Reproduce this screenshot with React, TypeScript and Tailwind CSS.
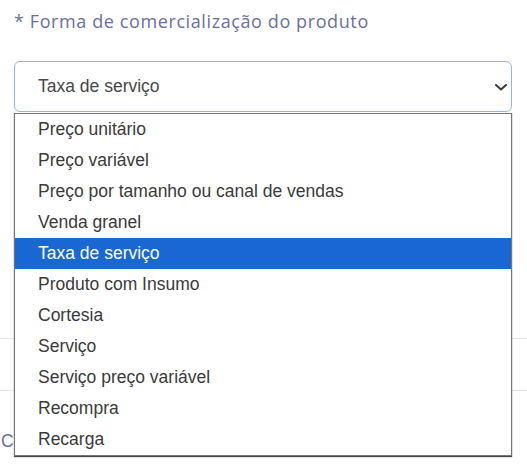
import React from 'react';

const options = [
    'Preço unitário',
    'Preço variável',
    'Preço por tamanho ou canal de vendas',
    'Venda granel',
    'Taxa de serviço',
    'Produto com Insumo',
    'Cortesia',
    'Serviço',
    'Serviço preço variável',
    'Recompra',
    'Recarga',
];

const selected = 'Taxa de serviço';

const App = () => {
    return (
        <div className="relative w-[527px] h-[471px] overflow-hidden bg-white">
            {/* campo */}
            <div className="pl-[14px] pr-[15px] pt-[9px]">
                <label className="block text-[18px] leading-[25px] text-[#6a6f9f] font-['Open_Sans',sans-serif] tracking-[0.6px]">
                    * Forma de comercialização do produto
                </label>
                <div className="mt-[27px] h-[51px] rounded-[6px] border border-[#86b7fe] flex items-center justify-between pl-[23px] pr-[2px] font-['Liberation_Sans',Arial,sans-serif] text-[17.5px] text-[#484848]">
                    <span>{selected}</span>
                    <svg width="16" height="16" viewBox="0 0 16 16" fill="none">
                        <path d="M3 6l5 4.5L13 6" stroke="#343a40" strokeWidth="2" strokeLinecap="round" strokeLinejoin="round" />
                    </svg>
                </div>
            </div>

            {/* conteúdo atrás */}
            <div className="mt-[226px] border-t border-[#e6e6ea]" />
            <div className="mt-[51px] border-t border-[#e6e6ea]" />
            <div className="mt-[38px] pl-[1px] text-[17.5px] leading-[24px] text-[#6a6f9f] font-['Liberation_Sans',Arial,sans-serif]">
                C
            </div>

            {/* lista aberta */}
            <ul className="absolute left-[14px] top-[113px] w-[498px] bg-white border border-[#767676] shadow-[0_1px_1px_rgba(0,0,0,0.7)] font-['Liberation_Sans',Arial,sans-serif] text-[17.5px] text-[#3a3a3a]">
                {options.map(opt => (
                    <li
                        key={opt}
                        className={`h-[31px] leading-[31px] pl-[23px] ${opt === selected ? 'bg-[#1967d2] text-white' : ''}`}
                    >
                        {opt}
                    </li>
                ))}
            </ul>
        </div>
    );
};

export default App;
